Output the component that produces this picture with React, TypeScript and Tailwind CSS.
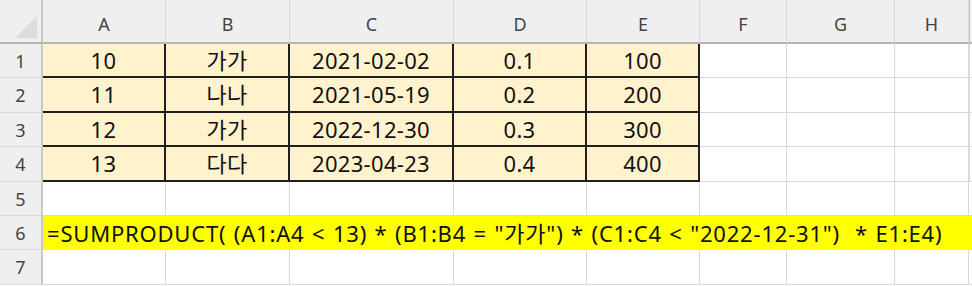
const cols = ['A', 'B', 'C', 'D', 'E', 'F', 'G', 'H'];

const rows = [
  ['10', '가가', '2021-02-02', '0.1', '100'],
  ['11', '나나', '2021-05-19', '0.2', '200'],
  ['12', '가가', '2022-12-30', '0.3', '300'],
  ['13', '다다', '2023-04-23', '0.4', '400'],
];

const font = { fontFamily: '"Noto Sans", "Noto Sans CJK KR", sans-serif' };

const Blank = () => <div className="border-r border-b border-[#d9d9d9] bg-white" />;

const RowHead = ({ n }: { n: number }) => (
  <div className="flex items-center justify-center border-r-2 border-b border-r-[#c8c8c8] border-b-[#dadada] bg-[#efefef] pt-[1px] text-[18px] text-[#444]">
    {n}
  </div>
);

export default function App() {
  return (
    <div className="h-[286px] w-[972px] overflow-hidden bg-white" style={font}>
      <div className="grid grid-cols-[43px_123px_124px_164px_133px_113px_87px_108px_74px_1fr] grid-rows-[44px_34px_35px_34px_35px_34px_34px_35px]">
        {/* header */}
        <div className="relative border-r-2 border-b-2 border-r-[#c8c8c8] border-b-[#b4b4b4] bg-[#efefef]">
          <svg className="absolute right-[4px] bottom-[4px]" width="22" height="22" viewBox="0 0 22 22">
            <polygon points="22,0 22,22 0,22" fill="#dcdcdc" />
          </svg>
        </div>
        {cols.map((c) => (
          <div
            key={c}
            className="flex items-center justify-center border-r border-b-2 border-r-[#dadada] border-b-[#b4b4b4] bg-[#efefef] pt-[6px] text-[18px] text-[#444]"
          >
            {c}
          </div>
        ))}
        <div className="border-b-2 border-l border-l-[#c8c8c8] border-b-[#b4b4b4] bg-[#efefef]" />

        {rows.map((r, i) => (
          <div key={i} className="contents">
            <RowHead n={i + 1} />
            {r.map((v, j) => (
              <div
                key={j}
                className="flex items-center justify-center border-r-2 border-b-2 border-[#1f1f1f] bg-[#fff2cc] text-[22px] tracking-[0.3px] text-[#111]"
              >
                {v}
              </div>
            ))}
            <Blank />
            <Blank />
            <Blank />
            <div className="border-b border-l border-[#d9d9d9]" />
          </div>
        ))}

        <RowHead n={5} />
        {cols.map((c) => (
          <Blank key={c} />
        ))}
        <div className="border-b border-[#d9d9d9]" />

        <RowHead n={6} />
        <div className="col-span-9 flex items-center whitespace-pre bg-[#ffff00] pl-[4px] text-[22px] tracking-[0.8px] [word-spacing:1px] text-[#111]">
          {'=SUMPRODUCT( (A1:A4 < 13) * (B1:B4 = "가가") * (C1:C4 < "2022-12-31")  * E1:E4)'}
        </div>

        <RowHead n={7} />
        {cols.map((c) => (
          <Blank key={c} />
        ))}
        <div className="border-b border-[#d9d9d9]" />
      </div>
    </div>
  );
}
